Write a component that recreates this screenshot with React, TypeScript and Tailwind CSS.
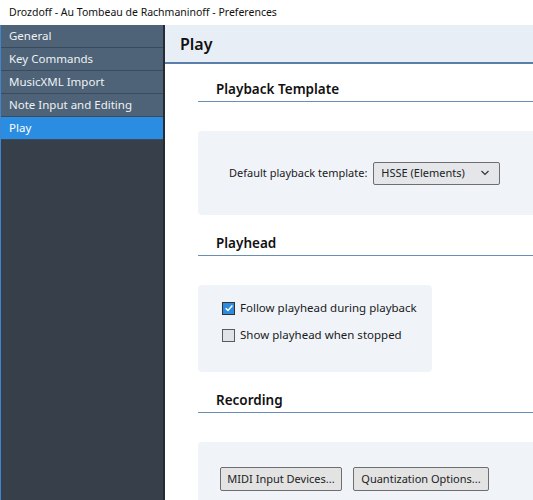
import React from "react";

const font = { fontFamily: '"Noto Sans", "Open Sans", sans-serif' };

const navItems = ["General", "Key Commands", "MusicXML Import", "Note Input and Editing", "Play"];

function SectionHeading({ children, first }: { children: React.ReactNode; first?: boolean }) {
  return (
    <div
      className={`${first ? "mt-[13px]" : "mt-[16px]"} h-[25px] border-b border-[#6a8db5] pl-[18px] text-[13.5px] font-semibold leading-[24px] text-[#111]`}
    >
      {children}
    </div>
  );
}

function Checkbox({ checked, label }: { checked: boolean; label: string }) {
  return (
    <label className="flex h-[16px] items-center gap-[5px] text-[11.5px] text-[#1a1a1a]">
      {checked ? (
        <span className="flex size-[13px] items-center justify-center border border-[#333] bg-[#2b8ce0]">
          <svg viewBox="0 0 10 10" className="size-[10px]">
            <path d="M1.6 5.2 L4 7.4 L8.4 2.4" fill="none" stroke="white" strokeWidth="1.5" />
          </svg>
        </span>
      ) : (
        <span className="size-[13px] border border-[#5a5a5a] bg-[#dfe4ea]" />
      )}
      {label}
    </label>
  );
}

function Button({ children, width }: { children: React.ReactNode; width: string }) {
  return (
    <button
      type="button"
      className={`${width} h-[24px] rounded-[2px] border border-[#6e6e6e] bg-[#e3e3e3] text-[11px] text-[#222]`}
    >
      {children}
    </button>
  );
}

export default function App() {
  return (
    <div className="flex h-[500px] w-[533px] flex-col overflow-hidden bg-white" style={font}>
      <div className="flex h-[25px] shrink-0 items-center pl-[9px] text-[10.5px] text-[#111]">
        Drozdoff - Au Tombeau de Rachmaninoff - Preferences
      </div>

      <div className="flex min-h-0 flex-1">
        <div className="flex w-[165px] shrink-0 flex-col border-l border-r-2 border-l-[#3f86d0] border-r-[#252c33] bg-[#37404a]">
          {navItems.map((item) => (
            <div
              key={item}
              className={`flex h-[23px] items-center border-b border-[#3a4b5b] pl-[8px] text-[11.5px] ${
                item === "Play" ? "bg-[#2a8de2] text-white" : "bg-[#4e6377] text-[#eef2f5]"
              }`}
            >
              {item}
            </div>
          ))}
        </div>

        <div className="min-w-0 flex-1">
          <div className="flex h-[39px] items-center border-b-2 border-[#5b7faa] bg-[#e8eef6] pl-[15px] text-[16px] font-semibold text-[#111]">
            Play
          </div>

          <div className="ml-[33px]">
            <SectionHeading first>Playback Template</SectionHeading>
            <div className="mt-[29px] flex h-[84px] items-center rounded-l-[4px] bg-[#f0f4f9] pl-[31px]">
              <span className="text-[11px] text-[#1a1a1a]">Default playback template:</span>
              <div className="ml-[6px] flex h-[23px] w-[127px] items-center justify-between rounded-[2px] border border-[#6e6e6e] bg-[#e4e6e9] pl-[7px] pr-[9px] text-[11px] text-[#222]">
                HSSE (Elements)
                <svg viewBox="0 0 10 6" className="h-[6px] w-[10px]">
                  <path d="M1.5 1 L5 4.5 L8.5 1" fill="none" stroke="#333" strokeWidth="1.2" />
                </svg>
              </div>
            </div>

            <SectionHeading>Playhead</SectionHeading>
            <div className="mt-[29px] flex h-[87px] w-[234px] flex-col gap-[11px] rounded-[4px] bg-[#f0f4f9] pl-[24px] pt-[15px]">
              <Checkbox checked label="Follow playhead during playback" />
              <Checkbox checked={false} label="Show playhead when stopped" />
            </div>

            <SectionHeading>Recording</SectionHeading>
            <div className="mt-[29px] flex h-[84px] gap-[11px] rounded-l-[4px] bg-[#f0f4f9] pl-[22px] pt-[25px]">
              <Button width="w-[122px]">MIDI Input Devices...</Button>
              <Button width="w-[136px]">Quantization Options...</Button>
            </div>
          </div>
        </div>
      </div>
    </div>
  );
}
